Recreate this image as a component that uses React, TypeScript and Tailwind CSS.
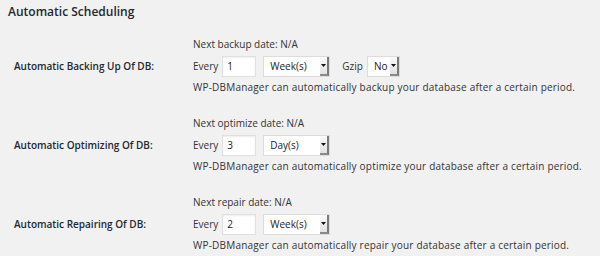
const font = { fontFamily: '"Open Sans", "Noto Sans", sans-serif' };

function Select({ value, width }: { value: string; width: string }) {
  return (
    <div className={`flex h-[21px] ${width} flex-none items-stretch border border-[#dcdcdc] bg-white`}>
      <span className="flex-1 pl-[6px] text-[10px] leading-[19px] text-[#222]">{value}</span>
      <span className="flex w-[9px] items-center justify-center border-r-2 border-b-2 border-r-[#7a7a7a] border-b-[#8a8a8a] bg-gradient-to-b from-[#fafafa] to-[#e2e2e2]">
        <svg width="5" height="3" viewBox="0 0 5 3">
          <path d="M0 0h5L2.5 3z" fill="#111" />
        </svg>
      </span>
    </div>
  );
}

function NumInput({ value }: { value: string }) {
  return (
    <div className="h-[21px] w-[34px] flex-none border border-[#e0e0e0] bg-white pl-[4px] text-[10px] leading-[19px] text-[#222] shadow-[inset_0_1px_2px_rgba(0,0,0,0.07)]">
      {value}
    </div>
  );
}

function Section({
  label,
  next,
  value,
  unit,
  desc,
  gzip,
}: {
  label: string;
  next: string;
  value: string;
  unit: string;
  desc: string;
  gzip?: boolean;
}) {
  return (
    <div className="flex items-center pt-[12px] pb-[7px]">
      <div className="w-[193px] flex-none pl-[14px] text-[10px] font-semibold text-[#23282d]">{label}</div>
      <div className="flex flex-col whitespace-nowrap text-[10px] text-[#333]">
        <div className="h-[16px] leading-[16px]">{next}</div>
        <div className="mt-[4px] flex h-[21px] items-center">
          <span className="mr-[4px]">Every</span>
          <NumInput value={value} />
          <div className="ml-[7px]">
            <Select value={unit} width="w-[67px]" />
          </div>
          {gzip && (
            <>
              <span className="ml-[12px] mr-[4px]">Gzip</span>
              <Select value="No" width="w-[33px]" />
            </>
          )}
        </div>
        <div className="mt-[2px] h-[17px] leading-[17px] tracking-[0.2px]">{desc}</div>
      </div>
    </div>
  );
}

export default function App() {
  return (
    <div className="h-[256px] w-[600px] overflow-hidden bg-[#f1f1f1]" style={font}>
      <div className="h-[24px] pl-[8px] text-[12px] font-semibold leading-[24px] text-[#23282d]">
        Automatic Scheduling
      </div>
      <Section
        label="Automatic Backing Up Of DB:"
        next="Next backup date: N/A"
        value="1"
        unit="Week(s)"
        desc="WP-DBManager can automatically backup your database after a certain period."
        gzip
      />
      <Section
        label="Automatic Optimizing Of DB:"
        next="Next optimize date: N/A"
        value="3"
        unit="Day(s)"
        desc="WP-DBManager can automatically optimize your database after a certain period."
      />
      <Section
        label="Automatic Repairing Of DB:"
        next="Next repair date: N/A"
        value="2"
        unit="Week(s)"
        desc="WP-DBManager can automatically repair your database after a certain period."
      />
    </div>
  );
}
